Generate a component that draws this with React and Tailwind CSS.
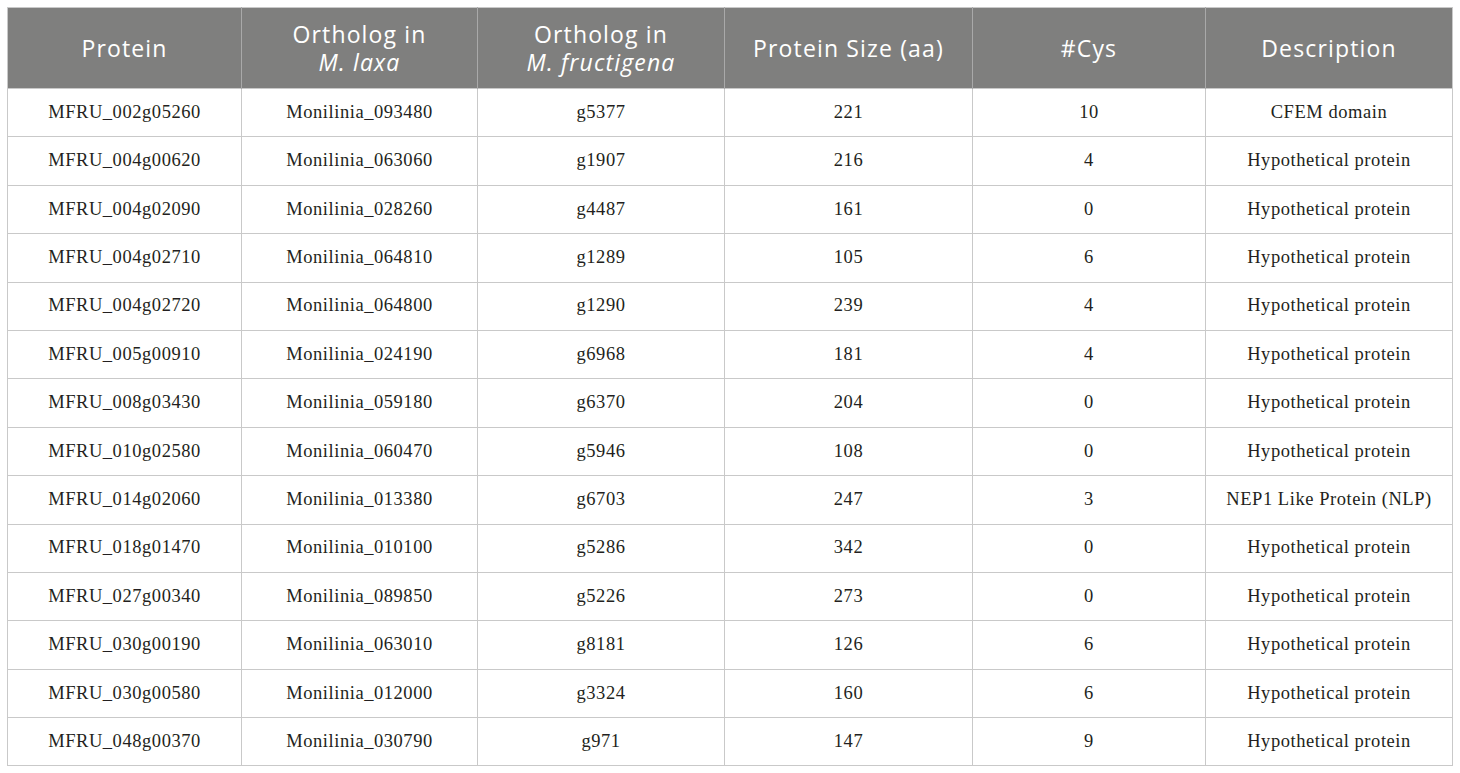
const rows = [
  ["MFRU_002g05260", "Monilinia_093480", "g5377", "221", "10", "CFEM domain"],
  ["MFRU_004g00620", "Monilinia_063060", "g1907", "216", "4", "Hypothetical protein"],
  ["MFRU_004g02090", "Monilinia_028260", "g4487", "161", "0", "Hypothetical protein"],
  ["MFRU_004g02710", "Monilinia_064810", "g1289", "105", "6", "Hypothetical protein"],
  ["MFRU_004g02720", "Monilinia_064800", "g1290", "239", "4", "Hypothetical protein"],
  ["MFRU_005g00910", "Monilinia_024190", "g6968", "181", "4", "Hypothetical protein"],
  ["MFRU_008g03430", "Monilinia_059180", "g6370", "204", "0", "Hypothetical protein"],
  ["MFRU_010g02580", "Monilinia_060470", "g5946", "108", "0", "Hypothetical protein"],
  ["MFRU_014g02060", "Monilinia_013380", "g6703", "247", "3", "NEP1 Like Protein (NLP)"],
  ["MFRU_018g01470", "Monilinia_010100", "g5286", "342", "0", "Hypothetical protein"],
  ["MFRU_027g00340", "Monilinia_089850", "g5226", "273", "0", "Hypothetical protein"],
  ["MFRU_030g00190", "Monilinia_063010", "g8181", "126", "6", "Hypothetical protein"],
  ["MFRU_030g00580", "Monilinia_012000", "g3324", "160", "6", "Hypothetical protein"],
  ["MFRU_048g00370", "Monilinia_030790", "g971", "147", "9", "Hypothetical protein"],
];

const widths = ["w-[234px]", "w-[236px]", "w-[247px]", "w-[248px]", "w-[233px]", "w-[247px]"];

export default function App() {
  return (
    <div className="bg-white w-[1460px] h-[773px] pt-[7px] pl-[7px]">
      <table className="border-collapse table-fixed w-[1446px] border border-[#c9c9c9]">
        <thead>
          <tr className="bg-[#7f7f7e] text-white font-['Open_Sans',sans-serif] text-[23px] tracking-[0.05em] leading-[28px] h-[81px]">
            <th className={`${widths[0]} font-normal border-r border-[#a9a9a9]`}>Protein</th>
            <th className={`${widths[1]} font-normal border-r border-[#a9a9a9]`}>
              Ortholog in
              <br />
              <i>M. laxa</i>
            </th>
            <th className={`${widths[2]} font-normal border-r border-[#a9a9a9]`}>
              Ortholog in
              <br />
              <i>M. fructigena</i>
            </th>
            <th className={`${widths[3]} font-normal border-r border-[#a9a9a9]`}>Protein Size (aa)</th>
            <th className={`${widths[4]} font-normal border-r border-[#a9a9a9]`}>#Cys</th>
            <th className={`${widths[5]} font-normal`}>Description</th>
          </tr>
        </thead>
        <tbody className="font-['Liberation_Serif',serif] text-[18.5px] tracking-[0.03em] text-[#231f20]">
          {rows.map((r) => (
            <tr key={r[0]} className="h-[48.4px] border-t border-[#c9c9c9]">
              {r.map((c, i) => (
                <td key={i} className="text-center border-l border-[#c9c9c9] p-0">
                  {c}
                </td>
              ))}
            </tr>
          ))}
        </tbody>
      </table>
    </div>
  );
}
